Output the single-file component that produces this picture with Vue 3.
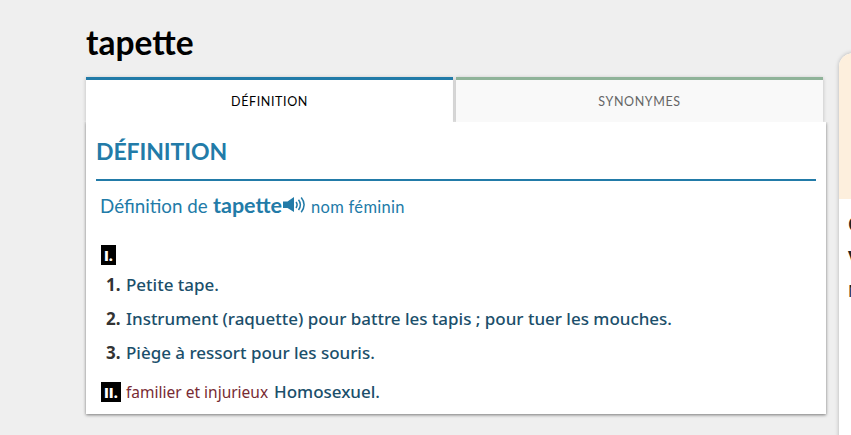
<template>
  <div class="page">
    <main class="entry">
      <h1 class="word">tapette</h1>

      <nav class="tabs">
        <a
          v-for="tab in tabs"
          :key="tab"
          class="tab"
          :class="{ active: tab === current }"
          @click="current = tab"
        >{{ tab }}</a>
      </nav>

      <section class="panel">
        <h2 class="panel-title">DÉFINITION</h2>

        <div class="headword">
          <span class="intro">Définition de</span>
          <strong class="name">tapette</strong>
          <svg class="sound" width="23" height="18" viewBox="0 0 23 18">
            <path d="M0 5.5H4.5L11 1V16L4.5 12H0Z" fill="#227ba8" />
            <path
              d="M13 6Q15.2 8.7 13 12M15.5 3.8Q19.3 8.7 15.5 14M18.2 1.5Q24 8.7 18.2 16.2"
              fill="none"
              stroke="#227ba8"
              stroke-width="1.5"
            />
          </svg>
          <span class="category">nom féminin</span>
        </div>

        <div class="roman-row"><b class="roman">I.</b></div>
        <ol class="senses">
          <li v-for="(sense, index) in senses" :key="index" class="sense">
            <b class="number">{{ index + 1 }}.</b>
            <span class="text">{{ sense }}</span>
          </li>
        </ol>
        <div class="roman-row">
          <b class="roman double">II.</b>
          <span class="mark">familier et injurieux</span>
          <span class="text last">Homosexuel.</span>
        </div>
      </section>
    </main>

    <aside class="side">
      <div class="side-top"></div>
      <div class="side-body">
        <b class="side-line">C</b>
        <b class="side-line">v</b>
        <span class="side-line small">N</span>
      </div>
    </aside>
  </div>
</template>

<script setup>
import { ref } from 'vue'

const tabs = ['DÉFINITION', 'SYNONYMES']
const current = ref('DÉFINITION')

const senses = [
  'Petite tape.',
  'Instrument (raquette) pour battre les tapis ; pour tuer les mouches.',
  'Piège à ressort pour les souris.'
]
</script>

<style>
body {
  background: #efefef;
  overflow: hidden;
}
</style>

<style scoped>
.page {
  display: flex;
  align-items: flex-start;
  width: 851px;
  height: 435px;
  overflow: hidden;
  box-sizing: border-box;
  padding-left: 86px;
  font-family: "Noto Sans", "Open Sans", sans-serif;
  background: #efefef;
}

.entry {
  width: 741px;
  flex-shrink: 0;
}

.word {
  margin: 0;
  height: 77px;
  box-sizing: border-box;
  padding-top: 22px;
  font: 700 33.5px/40px Lato, sans-serif;
  color: #000;
}

.tabs {
  display: flex;
  gap: 3px;
  width: 737px;
  height: 45px;
}

.tab {
  flex: 1;
  box-sizing: border-box;
  border-top: 3px solid #8fb399;
  background: #f9f9f9;
  box-shadow: 0 1px 4px rgba(0, 0, 0, 0.22);
  text-align: center;
  font: 400 12.5px/43px Lato, sans-serif;
  letter-spacing: 0.6px;
  color: #666;
}

.tab.active {
  border-top-color: #227ba8;
  background: #fff;
  color: #000;
}

.panel {
  position: relative;
  box-sizing: border-box;
  width: 740px;
  height: 292px;
  padding: 0 10px;
  background: #fff;
  box-shadow: 0 1px 3px rgba(0, 0, 0, 0.5);
  clip-path: inset(0 -6px -6px -6px);
}

.panel-title {
  margin: 0;
  height: 59px;
  box-sizing: border-box;
  border-bottom: 2px solid #227ba8;
  font: 700 23px/59px Lato, sans-serif;
  letter-spacing: -0.1px;
  color: #227ba8;
}

.headword {
  display: flex;
  align-items: baseline;
  height: 64px;
  padding-left: 4px;
  font-family: Lato, sans-serif;
  line-height: 48px;
  color: #227ba8;
  white-space: nowrap;
}

.intro {
  width: 113px;
  font-size: 18.8px;
}

.name {
  width: 70px;
  font-size: 21.5px;
}

.sound {
  margin-right: 5px;
  transform: translateY(1px);
}

.category {
  font-size: 16.5px;
  letter-spacing: 0.3px;
}

.roman-row {
  display: flex;
  align-items: baseline;
  height: 20px;
  padding-left: 5px;
  line-height: 20px;
  white-space: nowrap;
}

.roman {
  width: 15px;
  height: 20px;
  box-sizing: border-box;
  padding-left: 3px;
  background: #000;
  color: #fff;
  font: 900 14px/22px "Open Sans", sans-serif;
}

.roman.double {
  width: 20px;
}

.senses {
  margin: 3px 0 12px;
  padding: 0;
  list-style: none;
}

.sense {
  display: flex;
  align-items: baseline;
  height: 34px;
  line-height: 34px;
  white-space: nowrap;
}

.number {
  width: 20px;
  padding-left: 10px;
  font-size: 17px;
  color: #333;
}

.text {
  font-size: 17px;
  font-weight: 500;
  letter-spacing: -0.02px;
  color: #1b4f6b;
}

.text.last {
  font-size: 17px;
}

.mark {
  width: 153px;
  padding-left: 5px;
  box-sizing: border-box;
  font-size: 15.5px;
  color: #782b33;
}

.side {
  flex-shrink: 0;
  width: 260px;
  height: 420px;
  margin: 53px 0 0 12px;
  border-radius: 14px 14px 0 0;
  background: #fff;
  box-shadow: 0 0 4px rgba(0, 0, 0, 0.25);
}

.side-top {
  height: 146px;
  border-radius: 14px 14px 0 0;
  background: #fdefdd;
}

.side-body {
  display: flex;
  flex-direction: column;
  padding: 10px 0 0 9px;
}

.side-line {
  font-size: 19px;
  line-height: 31px;
  color: #222;
}

.side-line.small {
  font-size: 16px;
  line-height: 40px;
}
</style>
